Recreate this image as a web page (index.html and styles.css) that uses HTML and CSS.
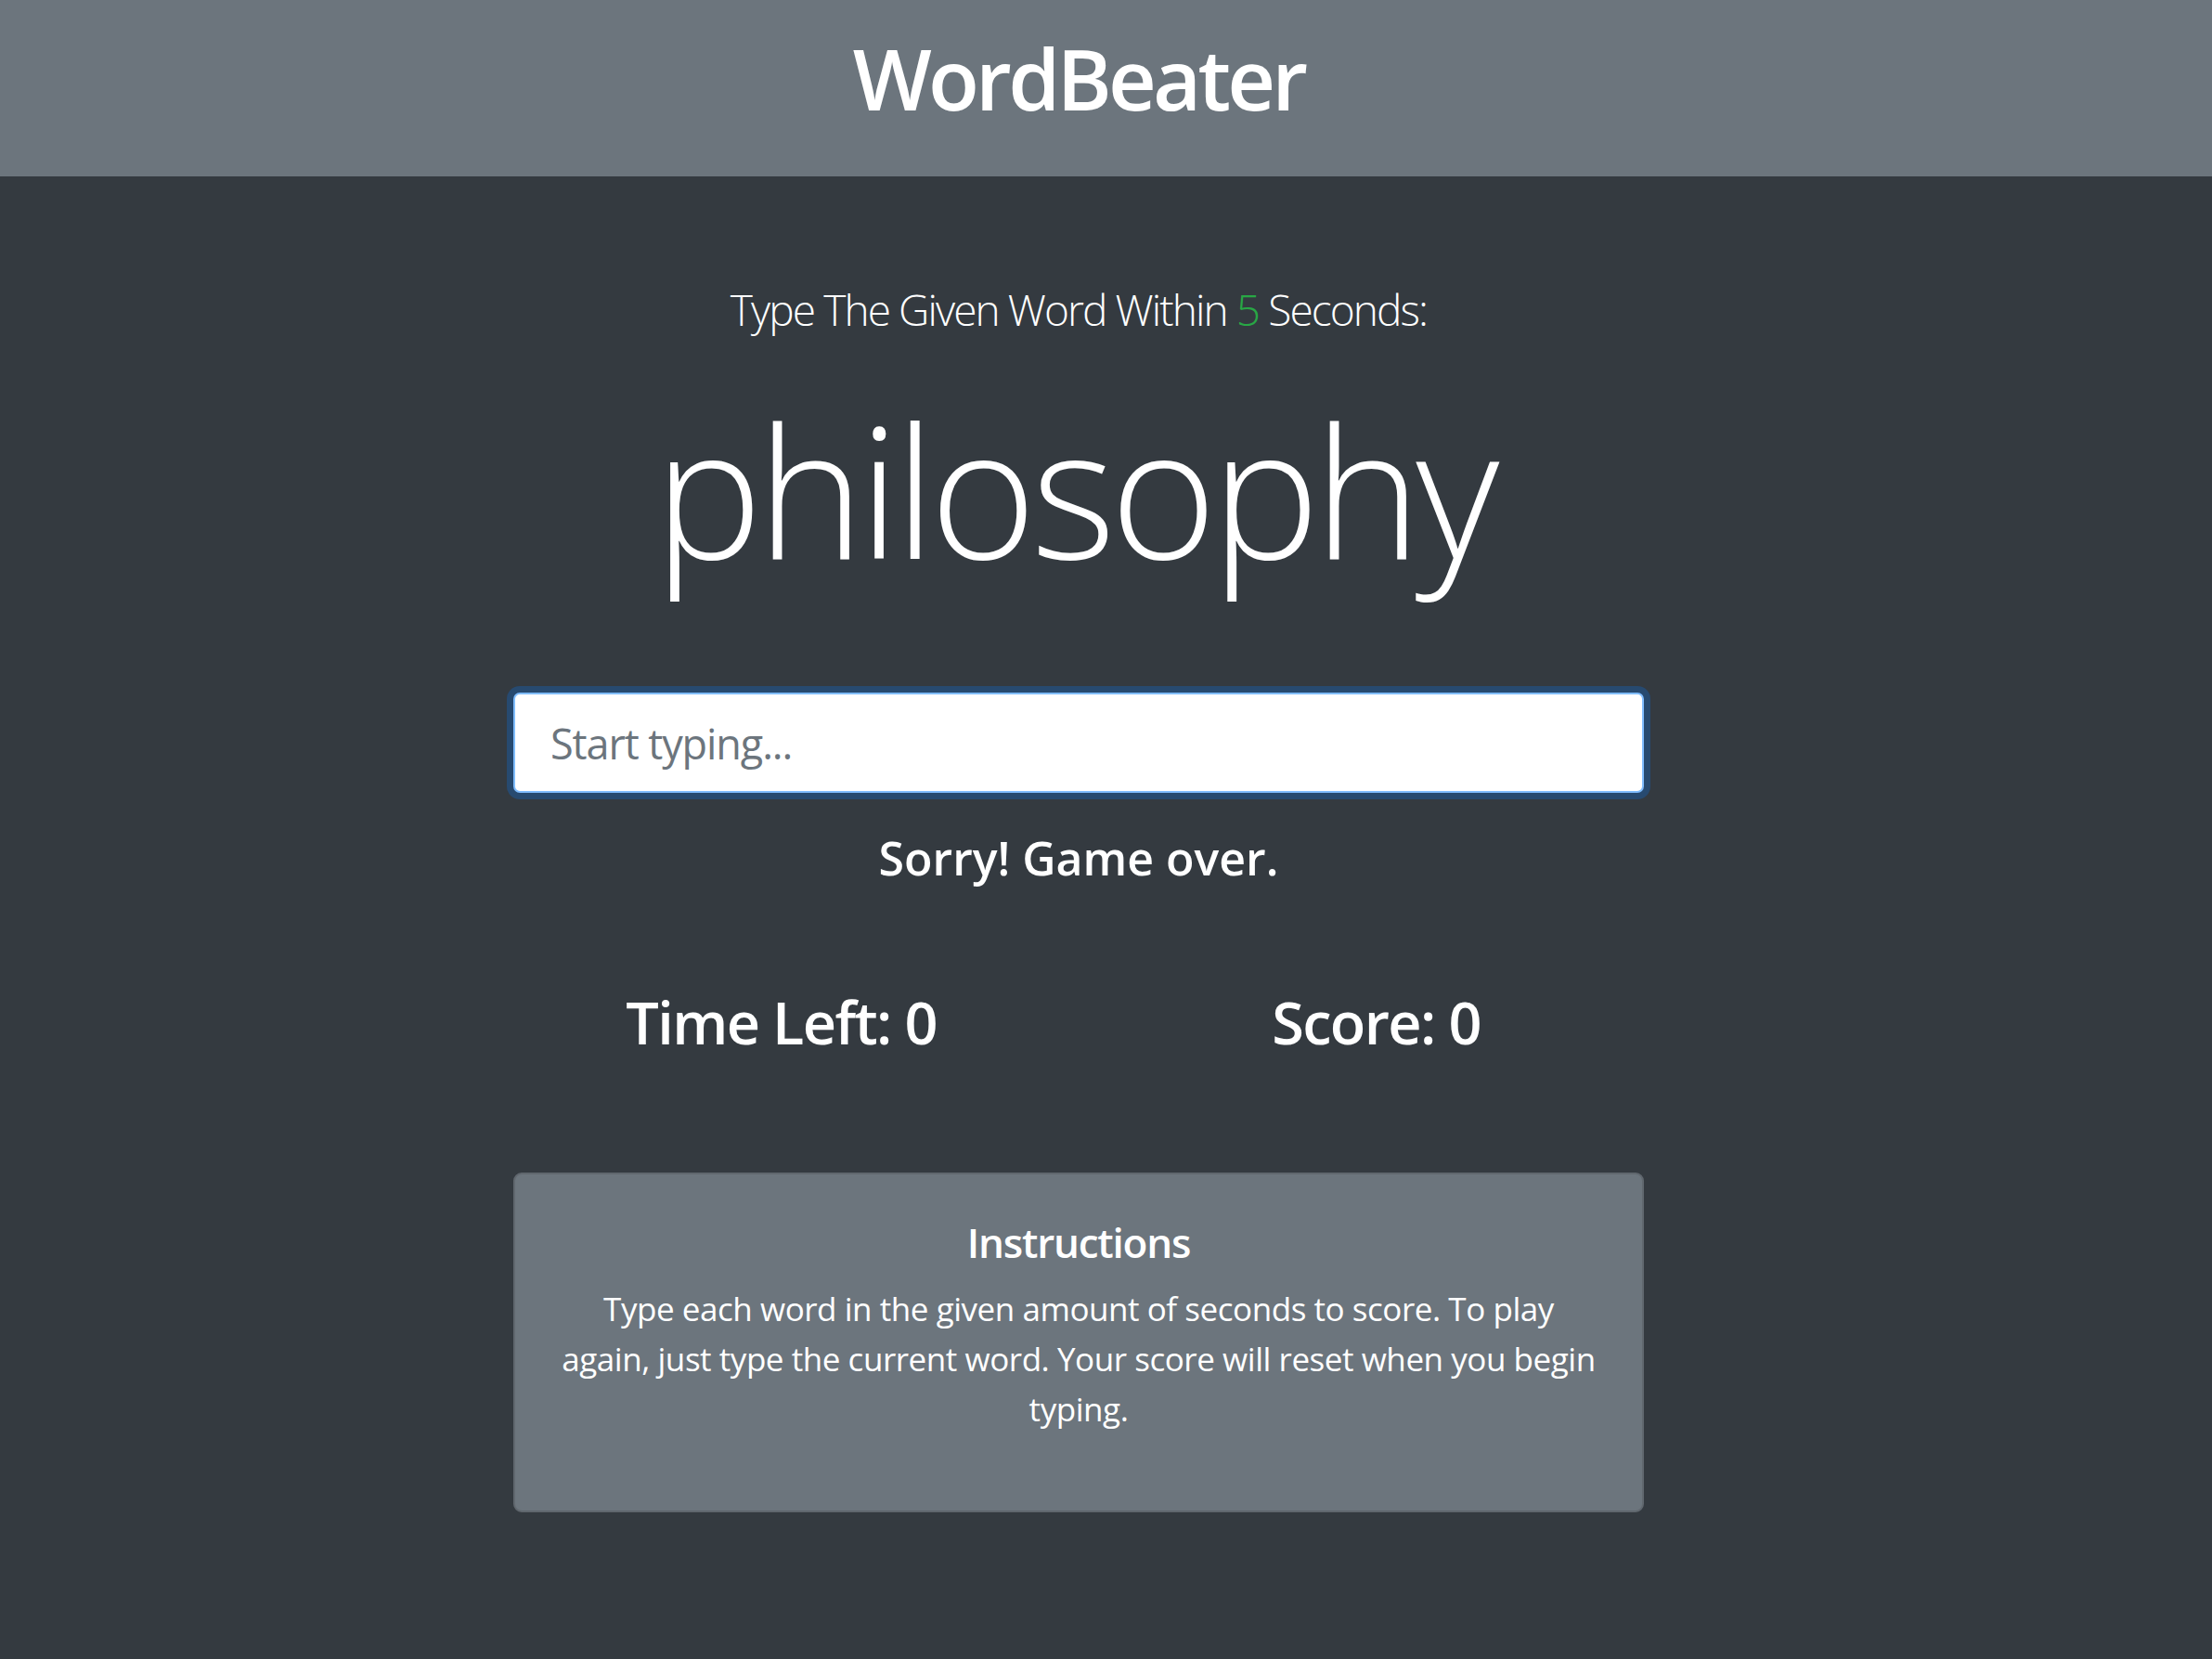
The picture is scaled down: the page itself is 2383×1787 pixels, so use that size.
FILE: index.html
```html
<!DOCTYPE html>
<html lang="en">
<head>
<meta charset="utf-8">
<title>WordBeater</title>
<link rel="stylesheet" href="styles.css">
</head>
<body>
<header class="topbar">
  <h1 class="brand">WordBeater</h1>
</header>
<main class="shell">
  <div class="container">
    <p class="lead">Type The Given Word Within <span class="secs">5</span> Seconds:</p>
    <h2 class="word">philosophy</h2>
    <input class="word-input" type="text" placeholder="Start typing..." autofocus>
    <h4 class="message">Sorry! Game over.</h4>
    <div class="stats">
      <h3 class="stat">Time Left: <span>0</span></h3>
      <h3 class="stat">Score: <span>0</span></h3>
    </div>
    <div class="card">
      <h5 class="card-title">Instructions</h5>
      <p class="card-text">Type each word in the given amount of seconds to score. To play again, just type the current word. Your score will reset when you begin typing.</p>
    </div>
  </div>
</main>
</body>
</html>
```

FILE: styles.css
```css
* { box-sizing: border-box; }

html, body {
  margin: 0;
  padding: 0;
}

body {
  background: #343a40;
  color: #fff;
  font-family: "Open Sans", "Noto Sans", sans-serif;
  min-height: 100vh;
}

.topbar {
  background: #6c757d;
  height: 190px;
  padding: 30px 59px 0 0;
  text-align: center;
}

.brand {
  margin: 0;
  font-size: 90px;
  font-weight: 600;
  line-height: 108px;
  letter-spacing: -3.8px;
}

.shell {
  padding-right: 59px;
}

.container {
  width: 1218px;
  margin: 0 auto;
  text-align: center;
}

.lead {
  margin: 113px 0 0;
  font-size: 46px;
  font-weight: 300;
  line-height: 60px;
  letter-spacing: -1.9px;
}

.secs {
  color: #28a745;
}

.word {
  margin: 43px 0 0;
  font-size: 196px;
  font-weight: 300;
  line-height: 240px;
  letter-spacing: -6px;
  padding-right: 10px;
}

.word-input {
  display: block;
  width: 100%;
  height: 108px;
  margin: 100px 0 0;
  padding: 0 38px;
  border: 2px solid #80bdff;
  border-radius: 7px;
  background: #fff;
  color: #495057;
  font-family: inherit;
  font-size: 45px;
  letter-spacing: -1.1px;
  box-shadow: 0 0 0 7px #274a70;
  outline: none;
}

.word-input::placeholder {
  color: #6c757d;
  opacity: 1;
}

.message {
  margin: 40px 0 0;
  font-size: 50px;
  font-weight: 600;
  line-height: 60px;
  letter-spacing: 0;
}

.stats {
  display: grid;
  grid-template-columns: 1fr 1fr;
  margin: 109px -32px 0;
}

.stat {
  margin: 0;
  padding: 0 32px;
  font-size: 63px;
  font-weight: 600;
  line-height: 76px;
  letter-spacing: -1.6px;
}

.card {
  margin-top: 124px;
  background: #6c757d;
  border: 2px solid #60676e;
  border-radius: 9px;
  padding: 47px 47px;
}

.card-title {
  margin: 0 0 18px;
  font-size: 44px;
  font-weight: 600;
  line-height: 53px;
  letter-spacing: -1.2px;
}

.card-text {
  margin: 0 0 35px;
  font-size: 35px;
  line-height: 54px;
  letter-spacing: -0.45px;
}
```
